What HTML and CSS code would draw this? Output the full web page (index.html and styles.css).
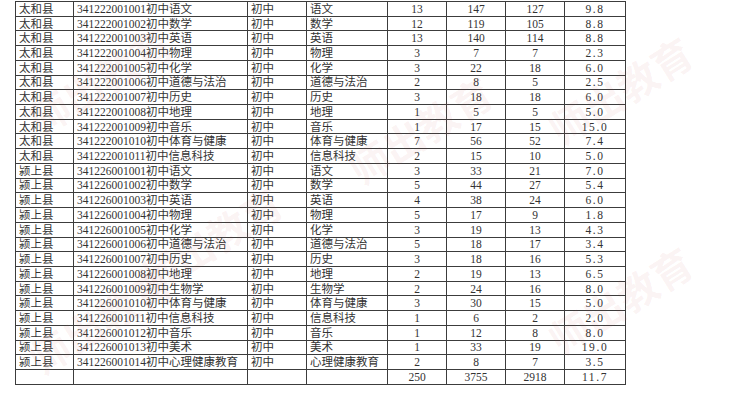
FILE: index.html
```html
<!DOCTYPE html>
<html lang="zh">
<head>
<meta charset="utf-8">
<title>招聘计划表</title>
<link rel="stylesheet" href="styles.css">
</head>
<body>
<div class="sheet">
<table class="grid">
<colgroup>
<col class="c1"><col class="c2"><col class="c3"><col class="c4"><col class="c5"><col class="c6"><col class="c7"><col class="c8">
</colgroup>
<tbody>
<tr><td>太和县</td><td>341222001001初中语文</td><td>初中</td><td>语文</td><td class="n">13</td><td class="n">147</td><td class="n">127</td><td class="n d">9.8</td></tr>
<tr><td>太和县</td><td>341222001002初中数学</td><td>初中</td><td>数学</td><td class="n">12</td><td class="n">119</td><td class="n">105</td><td class="n d">8.8</td></tr>
<tr><td>太和县</td><td>341222001003初中英语</td><td>初中</td><td>英语</td><td class="n">13</td><td class="n">140</td><td class="n">114</td><td class="n d">8.8</td></tr>
<tr><td>太和县</td><td>341222001004初中物理</td><td>初中</td><td>物理</td><td class="n">3</td><td class="n">7</td><td class="n">7</td><td class="n d">2.3</td></tr>
<tr><td>太和县</td><td>341222001005初中化学</td><td>初中</td><td>化学</td><td class="n">3</td><td class="n">22</td><td class="n">18</td><td class="n d">6.0</td></tr>
<tr><td>太和县</td><td>341222001006初中道德与法治</td><td>初中</td><td>道德与法治</td><td class="n">2</td><td class="n">8</td><td class="n">5</td><td class="n d">2.5</td></tr>
<tr><td>太和县</td><td>341222001007初中历史</td><td>初中</td><td>历史</td><td class="n">3</td><td class="n">18</td><td class="n">18</td><td class="n d">6.0</td></tr>
<tr><td>太和县</td><td>341222001008初中地理</td><td>初中</td><td>地理</td><td class="n">1</td><td class="n">5</td><td class="n">5</td><td class="n d">5.0</td></tr>
<tr><td>太和县</td><td>341222001009初中音乐</td><td>初中</td><td>音乐</td><td class="n">1</td><td class="n">17</td><td class="n">15</td><td class="n d">15.0</td></tr>
<tr><td>太和县</td><td>341222001010初中体育与健康</td><td>初中</td><td>体育与健康</td><td class="n">7</td><td class="n">56</td><td class="n">52</td><td class="n d">7.4</td></tr>
<tr><td>太和县</td><td>341222001011初中信息科技</td><td>初中</td><td>信息科技</td><td class="n">2</td><td class="n">15</td><td class="n">10</td><td class="n d">5.0</td></tr>
<tr><td>颍上县</td><td>341226001001初中语文</td><td>初中</td><td>语文</td><td class="n">3</td><td class="n">33</td><td class="n">21</td><td class="n d">7.0</td></tr>
<tr><td>颍上县</td><td>341226001002初中数学</td><td>初中</td><td>数学</td><td class="n">5</td><td class="n">44</td><td class="n">27</td><td class="n d">5.4</td></tr>
<tr><td>颍上县</td><td>341226001003初中英语</td><td>初中</td><td>英语</td><td class="n">4</td><td class="n">38</td><td class="n">24</td><td class="n d">6.0</td></tr>
<tr><td>颍上县</td><td>341226001004初中物理</td><td>初中</td><td>物理</td><td class="n">5</td><td class="n">17</td><td class="n">9</td><td class="n d">1.8</td></tr>
<tr><td>颍上县</td><td>341226001005初中化学</td><td>初中</td><td>化学</td><td class="n">3</td><td class="n">19</td><td class="n">13</td><td class="n d">4.3</td></tr>
<tr><td>颍上县</td><td>341226001006初中道德与法治</td><td>初中</td><td>道德与法治</td><td class="n">5</td><td class="n">18</td><td class="n">17</td><td class="n d">3.4</td></tr>
<tr><td>颍上县</td><td>341226001007初中历史</td><td>初中</td><td>历史</td><td class="n">3</td><td class="n">18</td><td class="n">16</td><td class="n d">5.3</td></tr>
<tr><td>颍上县</td><td>341226001008初中地理</td><td>初中</td><td>地理</td><td class="n">2</td><td class="n">19</td><td class="n">13</td><td class="n d">6.5</td></tr>
<tr><td>颍上县</td><td>341226001009初中生物学</td><td>初中</td><td>生物学</td><td class="n">2</td><td class="n">24</td><td class="n">16</td><td class="n d">8.0</td></tr>
<tr><td>颍上县</td><td>341226001010初中体育与健康</td><td>初中</td><td>体育与健康</td><td class="n">3</td><td class="n">30</td><td class="n">15</td><td class="n d">5.0</td></tr>
<tr><td>颍上县</td><td>341226001011初中信息科技</td><td>初中</td><td>信息科技</td><td class="n">1</td><td class="n">6</td><td class="n">2</td><td class="n d">2.0</td></tr>
<tr><td>颍上县</td><td>341226001012初中音乐</td><td>初中</td><td>音乐</td><td class="n">1</td><td class="n">12</td><td class="n">8</td><td class="n d">8.0</td></tr>
<tr><td>颍上县</td><td>341226001013初中美术</td><td>初中</td><td>美术</td><td class="n">1</td><td class="n">33</td><td class="n">19</td><td class="n d">19.0</td></tr>
<tr><td>颍上县</td><td>341226001014初中心理健康教育</td><td>初中</td><td>心理健康教育</td><td class="n">2</td><td class="n">8</td><td class="n">7</td><td class="n d">3.5</td></tr>
<tr><td></td><td></td><td></td><td></td><td class="n">250</td><td class="n">3755</td><td class="n">2918</td><td class="n d">11.7</td></tr>
</tbody>
</table>
<span class="wm wm1">师出教育</span>
<span class="wm wm2">师出教育</span>
<span class="wm wm3">师出教育</span>
<span class="wm wm4">师出教育</span>
<span class="wm wm5">师出教育</span>
<span class="wm wm6">师出教育</span>
</div>
</body>
</html>
```

FILE: styles.css
```css
html, body {
  margin: 0;
  padding: 0;
  background: #ffffff;
}

.sheet {
  position: relative;
  width: 746px;
  height: 411px;
  overflow: hidden;
  padding: 1px 0 0 15px;
  box-sizing: border-box;
}

.grid {
  border-collapse: collapse;
  table-layout: fixed;
  width: 610px;
  font-family: "Liberation Serif", "Noto Sans CJK SC", serif;
  font-size: 11.5px;
  color: #333333;
}

.c1 { width: 58px; }
.c2 { width: 174px; }
.c3 { width: 59px; }
.c4 { width: 81px; }
.c5 { width: 59px; }
.c6 { width: 59px; }
.c7 { width: 59px; }
.c8 { width: 61px; }

.grid tr {
  height: 14.73px;
}

.grid td {
  border: 1.3px solid #3c3c3c;
  padding: 0 0 0 3px;
  line-height: 12px;
  white-space: nowrap;
  overflow: hidden;
  vertical-align: middle;
}

.grid td.n {
  text-align: center;
  padding: 0;
}

.grid td.d {
  letter-spacing: 1.6px;
}

.wm {
  position: absolute;
  font-family: "Noto Sans CJK SC", sans-serif;
  font-size: 40px;
  line-height: 40px;
  font-weight: 700;
  color: rgba(200, 90, 90, 0.07);
  transform: rotate(-32deg);
  white-space: nowrap;
  pointer-events: none;
}

.wm1 { left: 20px; top: 60px; }
.wm2 { left: 130px; top: 220px; }
.wm3 { left: 340px; top: 110px; }
.wm4 { left: 540px; top: 70px; }
.wm5 { left: 20px; top: 300px; }
.wm6 { left: 540px; top: 280px; }
```
